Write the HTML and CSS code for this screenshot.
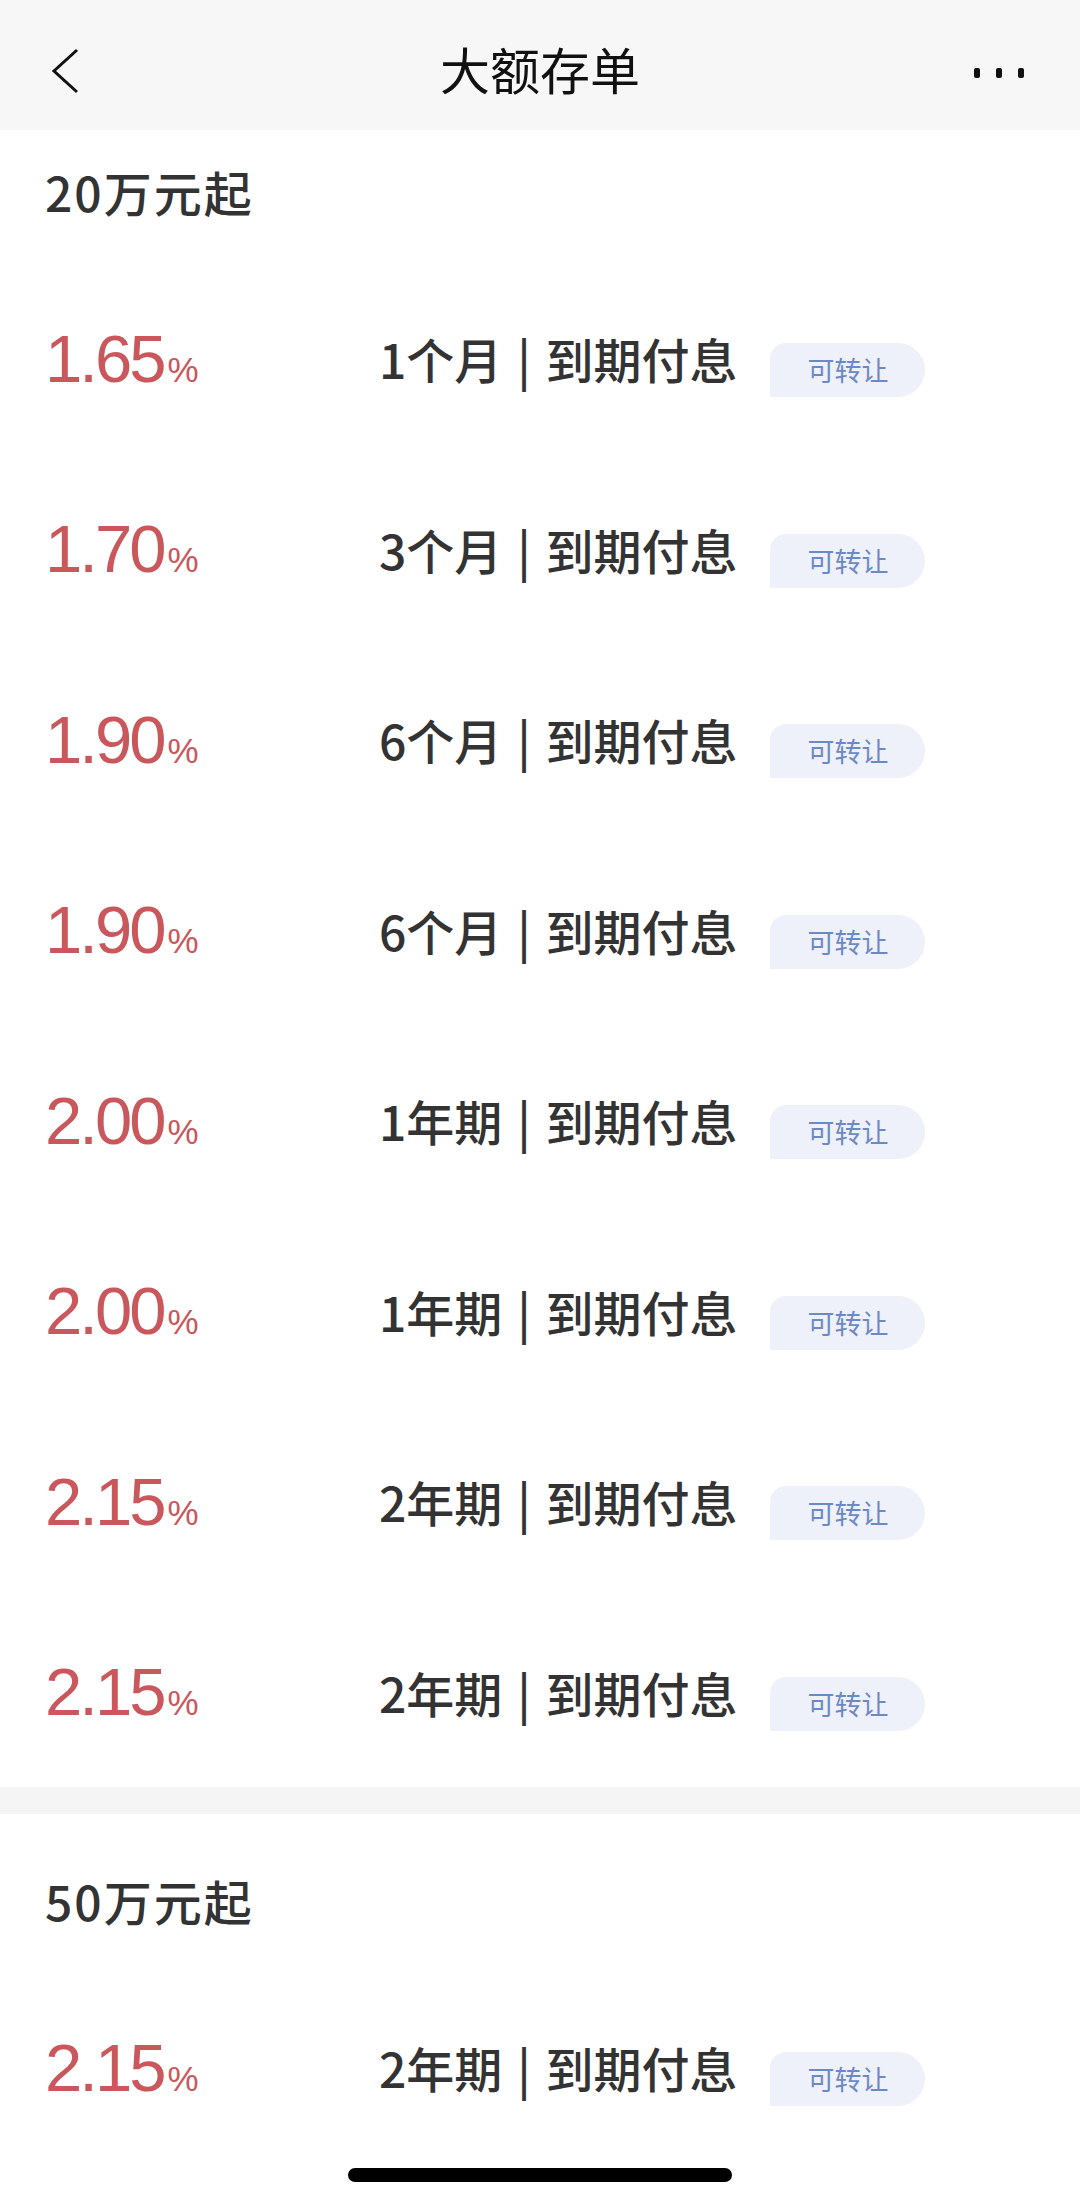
FILE: index.html
```html
<!DOCTYPE html>
<html lang="zh-CN">
<head>
  <meta charset="UTF-8" />
  <meta name="viewport" content="width=device-width, initial-scale=1" />
  <title>大额存单</title>
  <link rel="stylesheet" href="styles.css">
</head>
<body>

  <header class="topbar">
    <button class="back" aria-label="返回">
      <svg width="30" height="48" viewBox="0 0 30 48">
        <polyline points="26,2 3,23 26,44" fill="none" stroke="#111" stroke-width="3" />
      </svg>
    </button>
    <div class="title">大额存单</div>
    <button class="more" aria-label="更多">
      <span></span><span></span><span></span>
    </button>
  </header>

  <section class="group">
    <h2 class="group-title">20万元起</h2>
    <div class="list">
      <div class="row">
        <div class="rate">1.65<small>%</small></div>
        <div class="term">1个月 | 到期付息</div>
        <span class="tag">可转让</span>
      </div>
      <div class="row">
        <div class="rate">1.70<small>%</small></div>
        <div class="term">3个月 | 到期付息</div>
        <span class="tag">可转让</span>
      </div>
      <div class="row">
        <div class="rate">1.90<small>%</small></div>
        <div class="term">6个月 | 到期付息</div>
        <span class="tag">可转让</span>
      </div>
      <div class="row">
        <div class="rate">1.90<small>%</small></div>
        <div class="term">6个月 | 到期付息</div>
        <span class="tag">可转让</span>
      </div>
      <div class="row">
        <div class="rate">2.00<small>%</small></div>
        <div class="term">1年期 | 到期付息</div>
        <span class="tag">可转让</span>
      </div>
      <div class="row">
        <div class="rate">2.00<small>%</small></div>
        <div class="term">1年期 | 到期付息</div>
        <span class="tag">可转让</span>
      </div>
      <div class="row">
        <div class="rate">2.15<small>%</small></div>
        <div class="term">2年期 | 到期付息</div>
        <span class="tag">可转让</span>
      </div>
      <div class="row">
        <div class="rate">2.15<small>%</small></div>
        <div class="term">2年期 | 到期付息</div>
        <span class="tag">可转让</span>
      </div>
    </div>
  </section>

  <section class="group second">
    <h2 class="group-title">50万元起</h2>
    <div class="list">
      <div class="row">
        <div class="rate">2.15<small>%</small></div>
        <div class="term">2年期 | 到期付息</div>
        <span class="tag">可转让</span>
      </div>
    </div>
  </section>

  <div class="home-bar"></div>

</body>
</html>
```

FILE: styles.css
```css
body {
  margin: 0;
  min-height: 2204px;
  background: #ffffff;
  color: #333333;
  font-family: 'Noto Sans CJK SC', sans-serif;
}

.topbar {
  height: 130px;
  background: #f7f7f7;
  display: flex;
  align-items: center;
  justify-content: space-between;
  padding: 0 30px;
}

.topbar button {
  background: none;
  border: none;
  padding: 0;
  cursor: pointer;
}

.back {
  width: 120px;
  height: 48px;
  display: flex;
  align-items: center;
  padding-left: 21px !important;
  margin-top: 14px;
}

.title {
  font-size: 50px;
  color: #111111;
  line-height: 1;
  margin-top: 6px;
}

.more {
  width: 120px;
  display: flex;
  justify-content: flex-end;
  gap: 16px;
  padding-right: 26px !important;
  margin-top: 16px;
}

.more span {
  width: 6px;
  height: 10px;
  border-radius: 2px;
  background: #111111;
}

.group {
  padding: 31px 0 0 45px;
}

.group.second {
  border-top: 27px solid #f5f5f5;
  padding-top: 56px;
}

.group-title {
  margin: 0;
  font-size: 48px;
  font-weight: 500;
  letter-spacing: 2px;
  line-height: 60px;
  color: #333333;
}

.list {
  margin-top: 42px;
}

.row {
  height: 190.5px;
  display: flex;
  align-items: center;
}

.rate {
  width: 334px;
  font-family: 'Liberation Sans', sans-serif;
  font-size: 67px;
  letter-spacing: -3px;
  line-height: 1;
  color: #c9575c;
}

.rate small {
  font-size: 35px;
  letter-spacing: 0;
  margin-left: 4px;
}

.term {
  font-size: 48px;
  font-weight: 500;
  word-spacing: 4px;
  line-height: 1;
  color: #333333;
}

.tag {
  margin: 24px 0 0 33px;
  height: 54px;
  line-height: 54px;
  padding: 0 37px;
  font-size: 27px;
  color: #6c89c5;
  background: #eef0fa;
  border-radius: 16px 27px 27px 0;
}

.home-bar {
  position: fixed;
  left: 348px;
  bottom: 22px;
  width: 384px;
  height: 14px;
  border-radius: 7px;
  background: #000000;
}
```
